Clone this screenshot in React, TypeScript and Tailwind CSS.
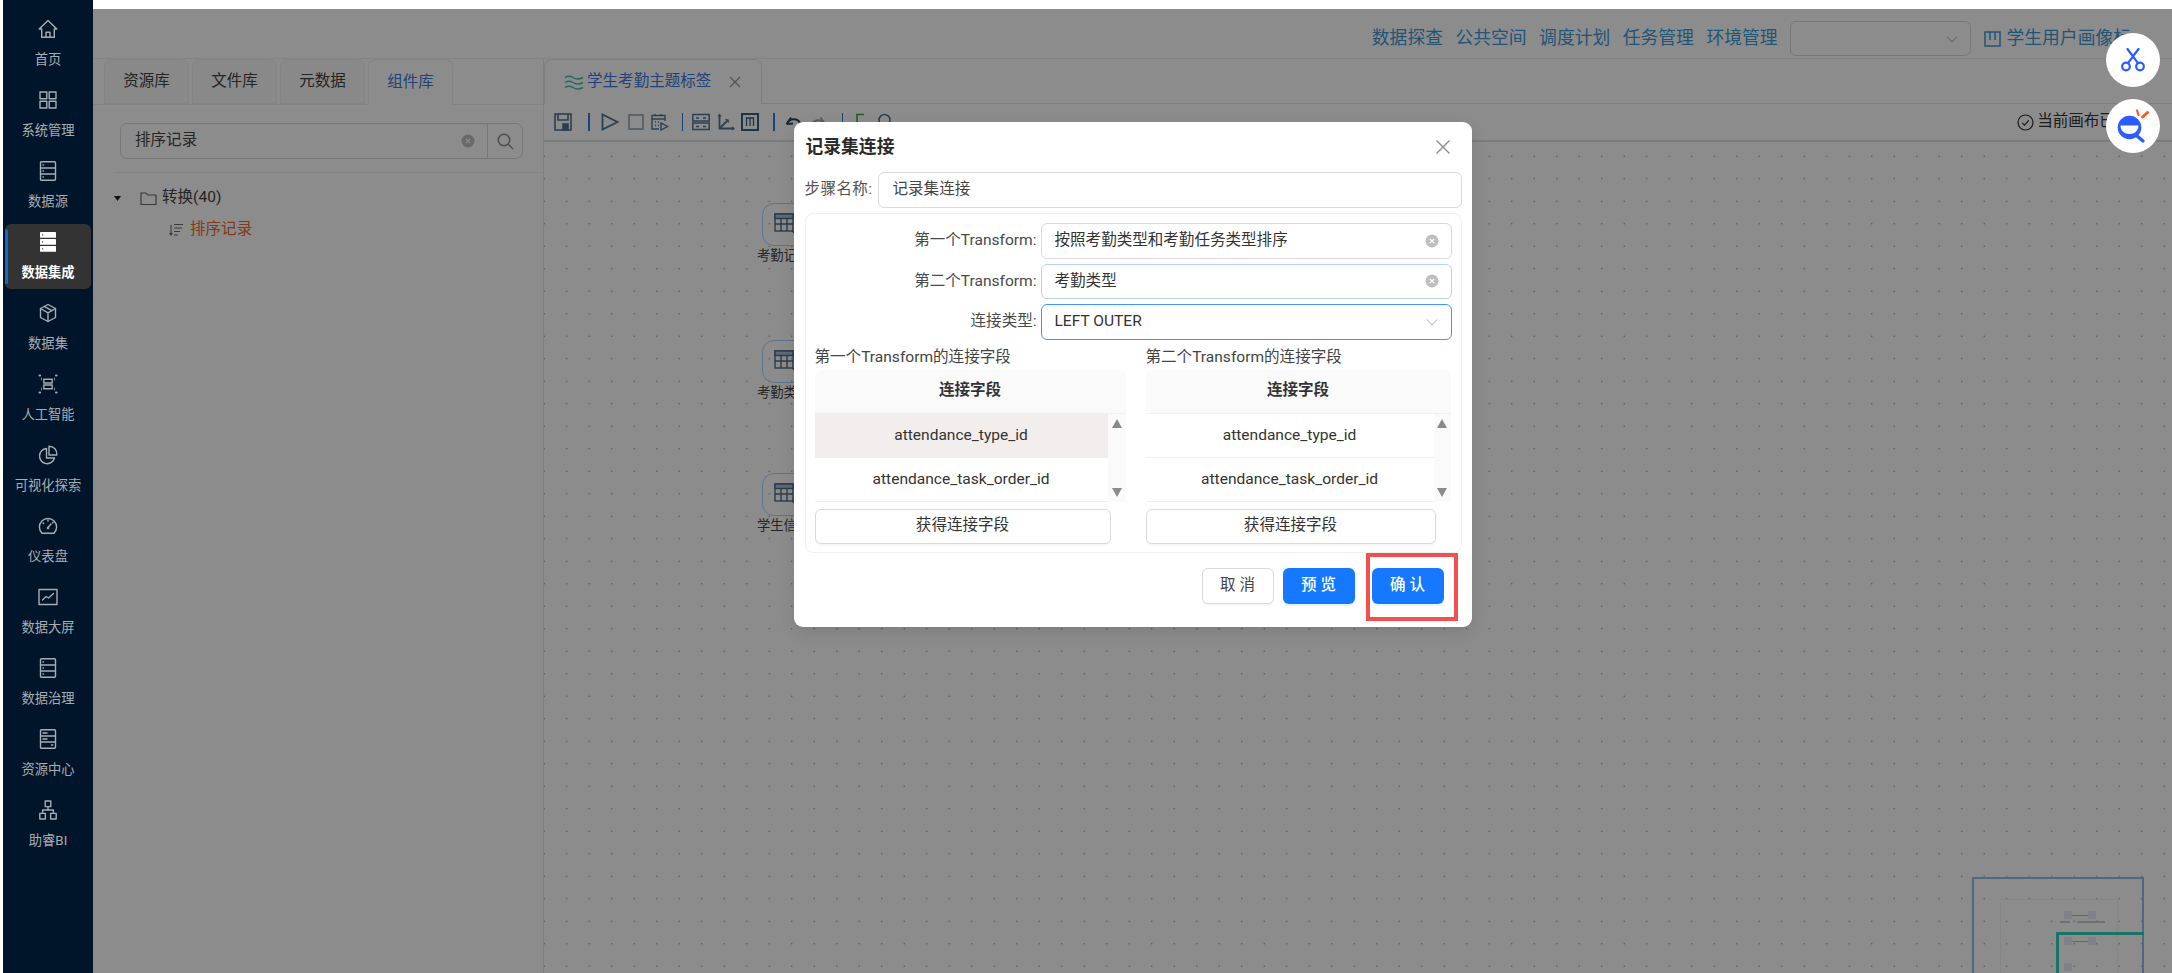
import React from "react";

type IP = { className?: string };
const S = ({ children, size = 20, vb = "0 0 20 20", className = "", sw = 1.4 }: { children: React.ReactNode; size?: number; vb?: string; className?: string; sw?: number }) => (
  <svg width={size} height={size} viewBox={vb} fill="none" stroke="currentColor" strokeWidth={sw} strokeLinecap="round" strokeLinejoin="round" className={className}>
    {children}
  </svg>
);

const Home = () => <S><path d="M10 1.5 1.2 10h2.5v8.3h12.6V10h2.5z" /><path d="M8 18.3v-5h4v5" /></S>;
const Grid = () => <S><rect x="2" y="2" width="6.8" height="6.8" /><rect x="11.2" y="2" width="6.8" height="6.8" /><rect x="2" y="11.2" width="6.8" height="6.8" /><rect x="11.2" y="11.2" width="6.8" height="6.8" /></S>;
const Server = () => <S><rect x="2.5" y="0.8" width="15" height="18.4" rx="1" /><path d="M2.5 7h15M2.5 13h15" /><path d="M5 4h.5M5 10h.5M5 16h.5" /></S>;
const ServerFill = () => (
  <svg width="20" height="20" viewBox="0 0 20 20">
    <rect x="2" y="0" width="16" height="5.8" rx="0.6" fill="#fff" /><rect x="2" y="7" width="16" height="5.8" rx="0.6" fill="#fff" /><rect x="2" y="14" width="16" height="5.8" rx="0.6" fill="#fff" />
    <rect x="4" y="2.4" width="1.2" height="1" fill="#333" /><rect x="4" y="9.4" width="1.2" height="1" fill="#333" /><rect x="4" y="16.4" width="1.2" height="1" fill="#333" />
  </svg>
);
const Cube = () => <S><path d="M10 1.5 17.5 5.5v9L10 18.5l-7.5-4v-9z" /><path d="M2.5 5.5 10 9.8l7.5-4.3M10 9.8v8.7" /><path d="M6.2 3.4 13.8 7.6" /></S>;
const AI = () => <S><rect x="5.8" y="5.2" width="8.4" height="3.8" /><rect x="5.8" y="11" width="8.4" height="3.8" /><path d="M1.5 1.5h.6M18 1.5h.6M1.5 18.5h.6M18 18.5h.6" strokeWidth="2" /><path d="M3.5 4v2M16.5 4v2M3.5 14v2M16.5 14v2" strokeWidth="0.8" /></S>;
const Pie = () => <S><path d="M8.5 3.5a7.6 7.6 0 1 0 8 9.5H8.5z" /><path d="M11 1.2a7.8 7.8 0 0 1 7.8 8.8H11z" /></S>;
const Gauge = () => <S><path d="M4 17.2a8.6 8.6 0 1 1 12 0z" /><path d="M10 11.5 13 8" /><circle cx="10" cy="12" r="0.6" /><path d="M10 4v1M5 7l.7.6M15.2 6.2l-.6.7" /></S>;
const Chart = () => <S><rect x="1" y="2.5" width="18" height="15" /><path d="M4.5 13l3.5-3.5 2.5 1.5L15.5 6.5" /></S>;
const ServerLines = () => <S><rect x="2.5" y="0.8" width="15" height="18.4" rx="1" /><path d="M2.5 7h15M2.5 13h15" /><path d="M5 4h4M5 10h4M13.5 16h1.2" /></S>;
const Tree = () => <S><rect x="7.2" y="1" width="5.6" height="5.6" /><rect x="1.8" y="13.4" width="5.6" height="5.6" /><rect x="12.6" y="13.4" width="5.6" height="5.6" /><path d="M10 6.6v3.4M4.6 13.4V10h10.8v3.4" /></S>;

const NAV: { label: string; icon: React.ReactNode; active?: boolean }[] = [
  { label: "首页", icon: <Home /> },
  { label: "系统管理", icon: <Grid /> },
  { label: "数据源", icon: <Server /> },
  { label: "数据集成", icon: <ServerFill />, active: true },
  { label: "数据集", icon: <Cube /> },
  { label: "人工智能", icon: <AI /> },
  { label: "可视化探索", icon: <Pie /> },
  { label: "仪表盘", icon: <Gauge /> },
  { label: "数据大屏", icon: <Chart /> },
  { label: "数据治理", icon: <Server /> },
  { label: "资源中心", icon: <ServerLines /> },
  { label: "助睿BI", icon: <Tree /> },
];

const ClearDot = () => (
  <svg width="14" height="14" viewBox="0 0 14 14">
    <circle cx="7" cy="7" r="6.5" fill="#bfbfbf" />
    <path d="M4.8 4.8l4.4 4.4M9.2 4.8 4.8 9.2" stroke="#fff" strokeWidth="1.2" />
  </svg>
);

const Chevron = () => (
  <svg width="14" height="14" viewBox="0 0 14 14" fill="none" stroke="#bcbcbc" strokeWidth="1.1"><path d="M2 4.5 7 10l5-5.5" /></svg>
);

const Divider = ({ className }: IP) => <span className={`h-[18px] w-[1.5px] bg-[#2f7fd6] ${className}`} />;
const TI = "#4f7599";

const Toolbar = () => (
  <div className="flex h-[36px] items-center pl-[10px] text-[#4f7599]">
    <svg width="18" height="18" viewBox="0 0 18 18" fill="none" stroke={TI} strokeWidth="1.6"><rect x="1" y="1" width="16" height="16" /><path d="M4 1v6h10V1" /><rect x="9" y="11" width="5" height="6" fill={TI} /></svg>
    <Divider className="ml-[16px]" />
    <svg className="ml-[11px]" width="18" height="18" viewBox="0 0 18 18" fill="none" stroke={TI} strokeWidth="1.8"><path d="M1.5 1.5v15L16.5 9z" /></svg>
    <svg className="ml-[9px]" width="16" height="16" viewBox="0 0 16 16" fill="none" stroke="#8a9db0" strokeWidth="1.5"><rect x="1" y="1" width="14" height="14" /></svg>
    <svg className="ml-[7px]" width="18" height="18" viewBox="0 0 18 18" fill="none" stroke={TI} strokeWidth="1.4"><path d="M8 16H1V2.5h13V8" /><path d="M1 6h13M4 1v2M10 1v2M4 9h1M7 9h1M4 12.5h1M7 12.5h1" /><path d="M10 10v7l6.5-3.5z" /></svg>
    <Divider className="ml-[13px]" />
    <svg className="ml-[9px]" width="18" height="18" viewBox="0 0 18 18" fill="none" stroke={TI} strokeWidth="1.5"><rect x="0.8" y="1.5" width="16.4" height="6.5" /><rect x="0.8" y="10" width="16.4" height="6.5" /><path d="M4 5h3M11 5h3M4 13.5h3M11 13.5h3" /></svg>
    <svg className="ml-[7px]" width="18" height="18" viewBox="0 0 18 18" fill="none" stroke={TI} strokeWidth="1.8"><path d="M2.5 2v13.5H17" /><path d="M2.5 15.5 11 7" /><path d="M1 3.5 2.5 1.5 4 3.5M15 14l2 1.5-2 1.5M8.5 6.5 11 7l.5 2.5" strokeWidth="1.2" /></svg>
    <svg className="ml-[6px]" width="18" height="18" viewBox="0 0 18 18" fill="none" stroke="#3a5f82" strokeWidth="2"><rect x="1" y="1" width="16" height="16" /><path d="M5.5 13V5h7v8M9 5v8" strokeWidth="1.3" /></svg>
    <Divider className="ml-[14px]" />
    <svg className="ml-[10px]" width="17" height="14" viewBox="0 0 17 14" fill="none" stroke="#2c4a66" strokeWidth="2"><path d="M1.5 9 6 2.5M1.5 9 8 8.5" /><path d="M2.5 8a7 7 0 0 1 13 1.5" /></svg>
    <svg className="ml-[9px]" width="15" height="14" viewBox="0 0 15 14" fill="none" stroke="#a8a8a8" strokeWidth="2"><path d="M14 9 9.5 2.5M14 9l-6-.5" /><path d="M13 8a7 7 0 0 0-12 1.5" /></svg>
    <Divider className="ml-[16px]" />
    <svg className="ml-[12px]" width="10" height="18" viewBox="0 0 10 18" fill="none" stroke="#3fa34d" strokeWidth="1.6"><path d="M9 1.5H2v15h7" /></svg>
    <svg className="ml-[13px]" width="13" height="18" viewBox="0 0 13 18" fill="none" stroke={TI} strokeWidth="1.6"><circle cx="6.5" cy="7" r="5.5" /></svg>
    <div className="ml-auto flex items-center gap-[3px] pr-[26px] text-[15.55px] leading-none text-[#333]">
      <svg width="17" height="17" viewBox="0 0 17 17" fill="none" stroke="#333" strokeWidth="1.2"><circle cx="8.5" cy="8.5" r="7.5" /><path d="m5.2 8.8 2.3 2.3 4.2-4.6" /></svg>
      <span className="whitespace-nowrap">当前画布已保存</span>
    </div>
  </div>
);

const TableIcon = () => (
  <svg width="24" height="24" viewBox="0 0 24 24" fill="none" stroke="#506c88" strokeWidth="1.4">
    <rect x="1" y="1" width="18" height="17" /><rect x="1" y="1" width="18" height="4.5" fill="#a9c0d6" /><path d="M1 11h18M7 5.5V18M13 5.5V18" /><path d="M18 18l5 4M23 22v-3M23 22h-3" strokeWidth="1.6" />
  </svg>
);

const Node = ({ label, top }: { label: string; top: string }) => (
  <div className={`absolute left-[213px] flex w-[80px] flex-col items-start ${top}`}>
    <div className="ml-[5px] flex h-[43px] w-[44px] items-center justify-center rounded-[12px] border-[1.5px] border-[#b0d0ff] pl-[3px]"><TableIcon /></div>
    <span className="mt-[1px] whitespace-nowrap text-[13.3px] leading-[17px] text-[#444]">{label}</span>
  </div>
);

const Field = ({ label, value, right, border }: { label: string; value: string; right: React.ReactNode; border: string }) => (
  <div className="flex items-center justify-end pr-[9px]">
    <span className="mr-[4px] whitespace-nowrap text-[#4a4a4a]">{label}</span>
    <div className={`flex h-[35.5px] w-[411px] items-center justify-between rounded-[6px] border pl-[13px] pr-[12px] ${border}`}>
      <span className="text-[#333]">{value}</span>
      {right}
    </div>
  </div>
);

const FieldTable = ({ title, selected, wClass, listClass, btnClass }: { title: string; selected?: boolean; wClass: string; listClass: string; btnClass: string }) => (
  <div className={wClass}>
    <div className="h-[24px] whitespace-nowrap leading-[22px] text-[#444]">{title}</div>
    <div className="overflow-hidden rounded-t-[6px]">
      <div className="flex h-[44px] items-center justify-center border-b border-[#f0f0f0] bg-[#fafafa] font-bold text-[#333]">连接字段</div>
      <div className="flex h-[88px]">
        <div className={`flex flex-col ${listClass}`}>
          <div className={`flex h-[44px] items-center justify-center border-b border-[#f0f0f0] pt-[2px] text-[#333] ${selected ? "bg-[#f3eeee]" : "bg-white"}`}>attendance_type_id</div>
          <div className="flex h-[44px] items-center justify-center border-b border-[#f0f0f0] pt-[2px] text-[#333]">attendance_task_order_id</div>
        </div>
        <div className="flex flex-1 flex-col items-center justify-between bg-[#fafafa] py-[5px]">
          <svg width="10" height="9" viewBox="0 0 10 9"><path d="M5 0 10 9H0z" fill="#8a8a8a" /></svg>
          <svg width="10" height="9" viewBox="0 0 10 9"><path d="M5 9 10 0H0z" fill="#8a8a8a" /></svg>
        </div>
      </div>
    </div>
    <button className={`mt-[7px] flex h-[35px] items-center justify-center rounded-[6px] border border-[#d9d9d9] bg-white text-[#333] shadow-[0_2px_0_rgba(0,0,0,0.03)] ${btnClass}`}>获得连接字段</button>
  </div>
);

const Dialog = () => (
  <div className="relative h-[505px] w-[678px] rounded-[9px] bg-white text-[15.55px] shadow-[0_6px_16px_rgba(0,0,0,0.1)]">
    <div className="flex h-[50px] items-center justify-between pl-[12px] pr-[21px]">
      <span className="text-[17.8px] font-bold text-[#2b2b2b]">记录集连接</span>
      <svg width="16" height="16" viewBox="0 0 16 16" fill="none" stroke="#8c8c8c" strokeWidth="1.4"><path d="M1.5 1.5l13 13M14.5 1.5l-13 13" /></svg>
    </div>
    <div className="ml-[11px] mr-[10px] flex h-[36px] items-center">
      <span className="w-[73px] whitespace-nowrap tracking-[0.4px] text-[#555]">步骤名称:</span>
      <div className="flex h-full flex-1 items-center rounded-[6px] border border-[#d9d9d9] pl-[14px] text-[#444]">记录集连接</div>
    </div>
    <div className="ml-[11px] mr-[10px] mt-[5px] h-[340px] rounded-[8px] border border-[#f0f0f0] pl-[9px] pt-[9px]">
      <div className="flex flex-col gap-[5px]">
        <Field label="第一个Transform:" value="按照考勤类型和考勤任务类型排序" right={<ClearDot />} border="border-[#d9d9d9]" />
        <Field label="第二个Transform:" value="考勤类型" right={<ClearDot />} border="border-[#b9d2f2]" />
        <Field label="连接类型:" value="LEFT OUTER" right={<Chevron />} border="border-[#4096ff]" />
      </div>
      <div className="mt-[6px] flex gap-[20px]">
        <FieldTable title="第一个Transform的连接字段" selected wClass="w-[311px]" listClass="w-[293px]" btnClass="w-[296px]" />
        <FieldTable title="第二个Transform的连接字段" wClass="w-[305px]" listClass="w-[288px]" btnClass="w-[290px]" />
      </div>
    </div>
    <div className="mt-[15px] flex justify-end pr-[28px]">
      <button className="h-[36px] w-[72px] rounded-[6px] border border-[#d9d9d9] bg-white text-[#444] shadow-[0_2px_0_rgba(0,0,0,0.03)]">取 消</button>
      <button className="ml-[9px] h-[36px] w-[72px] rounded-[6px] bg-[#1677ff] font-medium text-white shadow-[0_2px_0_rgba(5,145,255,0.1)]">预 览</button>
      <button className="ml-[17px] h-[36px] w-[72px] rounded-[6px] bg-[#1677ff] font-medium text-white shadow-[0_2px_0_rgba(5,145,255,0.1)]">确 认</button>
    </div>
    <div className="pointer-events-none absolute left-[572px] top-[431px] h-[68px] w-[92px] border-[4px] border-[#f25050]" />
  </div>
);

const TopLinks = () => (
  <div className="flex h-[50px] items-center justify-end gap-[12.5px] overflow-hidden border-b border-[#f0f0f0] pr-[41px] pt-[10px] text-[17.8px] text-[#3f9ad8]">
    {["数据探查", "公共空间", "调度计划", "任务管理", "环境管理"].map((t) => <span key={t} className="whitespace-nowrap">{t}</span>)}
    <div className="flex h-[35px] w-[181px] items-center justify-end rounded-[6px] border border-[#d9d9d9] pr-[11px]"><Chevron /></div>
    <div className="flex items-center gap-[6px]">
      <svg width="17" height="16" viewBox="0 0 17 16" fill="none" stroke="#3f9ad8" strokeWidth="1.5"><rect x="1" y="1" width="15" height="14" /><path d="M6 1v8M11 1v8" /></svg>
      <span className="whitespace-nowrap">学生用户画像标</span>
    </div>
  </div>
);

const LeftPanel = () => (
  <div className="flex w-[451px] shrink-0 flex-col border-r border-[#e8e8e8] text-[15.55px]">
    <div className="flex h-[46px] items-end gap-[3px] border-b border-[#f0f0f0] pl-[11px]">
      {["资源库", "文件库", "元数据"].map((t) => (
        <div key={t} className="flex h-[45px] w-[85px] items-center justify-center rounded-t-[8px] border border-[#f0f0f0] bg-[#fafafa] text-[#444]">{t}</div>
      ))}
      <div className="-mb-px flex h-[46px] w-[85px] items-center justify-center rounded-t-[8px] border border-b-0 border-[#f0f0f0] bg-white text-[#3b79e0]">组件库</div>
    </div>
    <div className="ml-[27px] mt-[18px] flex h-[36px] w-[403px] items-center rounded-[7px] border border-[#d9d9d9]">
      <span className="flex-1 pl-[14px] text-[#444]">排序记录</span>
      <span className="mr-[12px]"><ClearDot /></span>
      <div className="flex h-full w-[35px] items-center justify-center border-l border-[#d9d9d9]">
        <svg width="17" height="17" viewBox="0 0 17 17" fill="none" stroke="#8a8a8a" strokeWidth="1.5"><circle cx="7" cy="7" r="5.7" /><path d="m11 11 5 5" /></svg>
      </div>
    </div>
    <div className="ml-[21px] mt-[13px] h-px bg-[#f0f0f0]" />
    <div className="mt-[15px] flex h-[20px] items-center pl-[21px] text-[#444]">
      <svg width="7" height="5" viewBox="0 0 7 5"><path d="M0 0h7L3.5 5z" fill="#222" /></svg>
      <svg className="ml-[19px]" width="17" height="13" viewBox="0 0 17 13" fill="none" stroke="#6b6b6b" strokeWidth="1.2"><path d="M1 1h5l1.5 2H16v9.5H1z" /></svg>
      <span className="ml-[5px] whitespace-nowrap">转换(40)</span>
    </div>
    <div className="mt-[12px] flex h-[20px] items-center pl-[76px]">
      <svg width="15" height="14" viewBox="0 0 15 14" fill="none" stroke="#6b6b6b" strokeWidth="1.1"><path d="M5 1.5h9M5 5h8M5 8.5h6M5 12h4" /><path d="M2 2v9.5M.5 10 2 12l1.5-2" /></svg>
      <span className="ml-[6px] whitespace-nowrap text-[#f4692a]">排序记录</span>
    </div>
  </div>
);

const MainTabs = () => (
  <div className="flex h-[45px] border-b border-[#e8e8e8] pt-0">
    <div className="-mb-px flex h-[45px] w-[218px] items-center rounded-t-[8px] border border-b-0 border-[#e8e8e8] bg-white pl-[19px] text-[15.55px] text-[#3b79e0]">
      <svg width="20" height="15" viewBox="0 0 20 15" fill="none" stroke="#3fc4b0" strokeWidth="1.5"><path d="M1 2.5c3-2 5-2 8 0s6 2 10 0M1 7.5c3-2 5-2 8 0s6 2 10 0" /><path d="M1 12.5c3-2 5-2 8 0s6 2 10 0" /></svg>
      <span className="ml-[3px] whitespace-nowrap">学生考勤主题标签</span>
      <svg className="ml-[18px]" width="12" height="12" viewBox="0 0 12 12" fill="none" stroke="#9a9a9a" strokeWidth="1.3"><path d="M1 1l10 10M11 1 1 11" /></svg>
    </div>
  </div>
);

const Minimap = () => (
  <div className="absolute left-[1428px] top-[735px] h-[120px] w-[172px] border-2 border-[#8fc0f5]">
    <div className="absolute left-[26px] top-[20px] h-[100px] w-[118px] border border-[#f4f4f4]" />
    <span className="absolute left-[90px] top-[32px] h-[8px] w-[8px] bg-[#e6ebf2]" />
    <span className="absolute left-[114px] top-[32px] h-[8px] w-[8px] bg-[#e6ebf2]" />
    <span className="absolute left-[98px] top-[36px] h-px w-[16px] bg-[#bbb]" />
    <span className="absolute left-[86px] top-[42px] h-[2px] w-[10px] bg-[#ccc]" />
    <span className="absolute left-[103px] top-[42px] h-[2px] w-[28px] bg-[#ccc]" />
    <span className="absolute left-[90px] top-[58px] h-[8px] w-[8px] bg-[#e6ebf2]" />
    <span className="absolute left-[114px] top-[58px] h-[8px] w-[8px] bg-[#e6ebf2]" />
    <span className="absolute left-[98px] top-[62px] h-px w-[16px] bg-[#bbb]" />
    <span className="absolute left-[90px] top-[84px] h-[8px] w-[8px] bg-[#e6ebf2]" />
    <div className="absolute bottom-[-2px] right-[-2px] h-[65px] w-[88px] border-l-[3px] border-t-[3px] border-[#2fd4b8]" />
  </div>
);

export default function App() {
  return (
    <div className="relative flex h-[973px] w-[2172px] overflow-hidden bg-white font-['Roboto','Noto_Sans_CJK_SC',sans-serif]">
      <aside className="ml-[3px] flex w-[90px] shrink-0 flex-col items-center gap-[6px] bg-[#001529] pt-[11px]">
        {NAV.map((n) => (
          <div key={n.label} className={`relative flex h-[65px] w-[86px] flex-col items-center rounded-[6px] ${n.active ? "bg-[#333333] font-bold text-white" : "text-[#a6adb4]"}`}>
            {n.active && <span className="absolute left-0 top-[5px] h-[55px] w-[3px] rounded-full bg-[#1668c8]" />}
            <span className="mt-[8px] h-[20px]">{n.icon}</span>
            <span className="mt-[12px] whitespace-nowrap text-[13.3px] leading-[18px]">{n.label}</span>
          </div>
        ))}
      </aside>
      <main className="flex min-w-0 flex-1 flex-col pt-[9px]">
        <TopLinks />
        <div className="flex min-h-0 flex-1">
          <LeftPanel />
          <div className="flex min-w-0 flex-1 flex-col">
            <MainTabs />
            <div className="border-b-2 border-[#e0e0e0]"><Toolbar /></div>
            <div className="relative flex-1 bg-[radial-gradient(circle,#888_0.8px,transparent_1px)] bg-[size:22.5px_22.5px] bg-[position:-11px_3px]">
              <Node label="考勤记录" top="top-[61px]" />
              <Node label="考勤类型" top="top-[198px]" />
              <Node label="学生信息" top="top-[331px]" />
              <Minimap />
            </div>
          </div>
        </div>
      </main>
      <div className="absolute bottom-0 left-[93px] right-0 top-[9px] flex justify-center bg-black/45 pt-[113px]">
        <Dialog />
      </div>
      <div className="absolute right-[12px] top-[33px] flex flex-col gap-[12px]">
        <div className="flex h-[54px] w-[54px] items-center justify-center rounded-full bg-white">
          <svg width="26" height="24" viewBox="0 0 26 24" fill="none" stroke="#2b5cff" strokeWidth="2.2" strokeLinecap="round">
            <circle cx="6" cy="18.5" r="3.8" /><circle cx="20" cy="18.5" r="3.8" />
            <path d="M8 15.2 18.5 1M18 15.2 7.5 1" />
          </svg>
        </div>
        <div className="flex h-[54px] w-[54px] items-center justify-center rounded-full bg-white">
          <svg width="54" height="54" viewBox="0 0 54 54">
            <circle cx="23.5" cy="28.5" r="11.8" fill="#2b5cff" />
            <path d="M31 37l6 5" stroke="#2b5cff" strokeWidth="3.4" strokeLinecap="round" />
            <path d="M14.5 26.5h18c0 5-4 8.5-9 8.5s-9-3.5-9-8.5z" fill="#fff" />
            <path d="M31 11.5 32.5 16" stroke="#ff5a1f" strokeWidth="2.2" strokeLinecap="round" />
            <path d="M41.5 13.5 36.5 18" stroke="#ff5a1f" strokeWidth="3" strokeLinecap="round" />
          </svg>
        </div>
      </div>
    </div>
  );
}
